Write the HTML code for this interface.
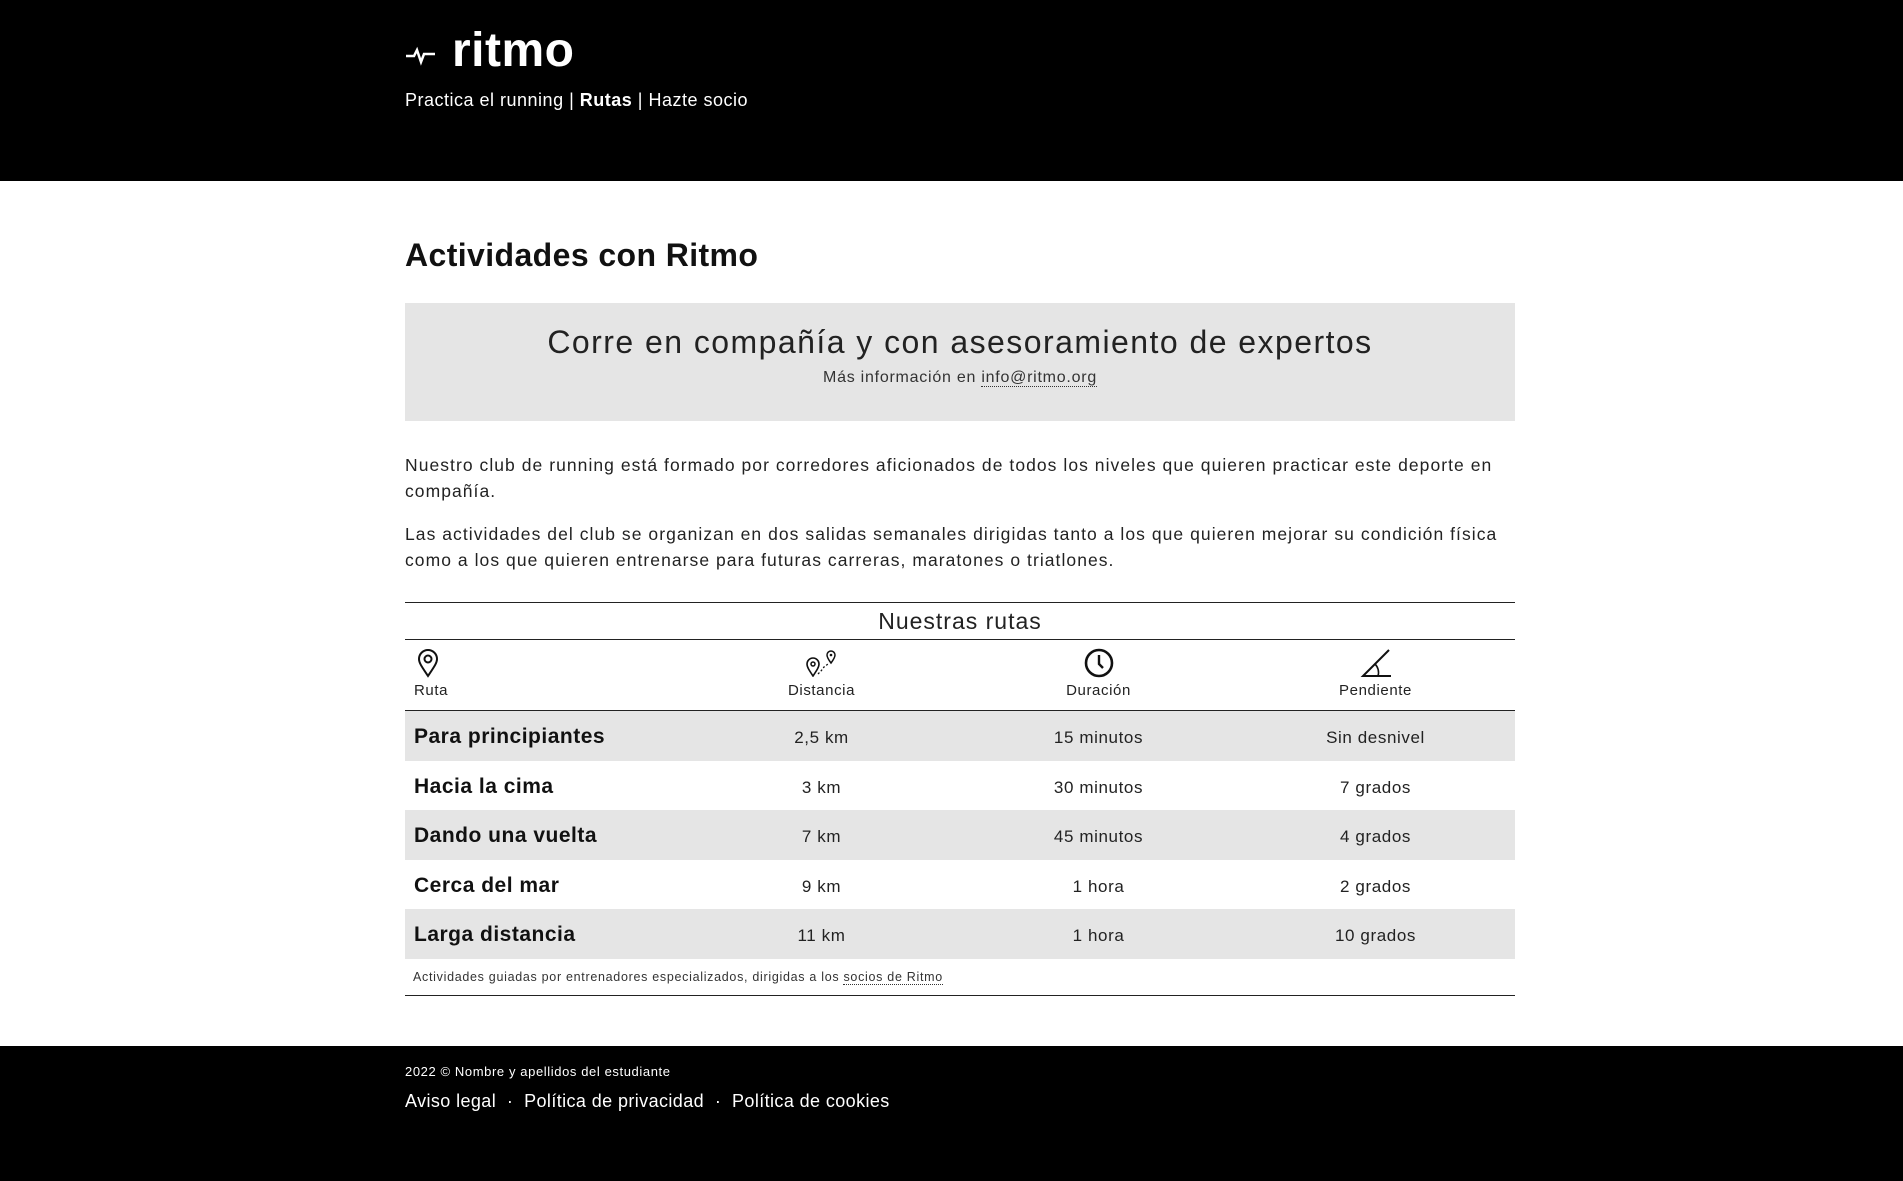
<!DOCTYPE html>
<html><head><meta charset="utf-8"><style>
*{margin:0;padding:0;box-sizing:border-box}
body{width:1903px;height:1181px;background:#fff;font-family:"Liberation Sans",sans-serif;color:#222;position:relative;overflow:hidden;letter-spacing:0.6px}
.a{position:absolute;white-space:nowrap}
header{position:absolute;left:0;top:0;width:1903px;height:181px;background:#000}
footer{position:absolute;left:0;top:1046px;width:1903px;height:135px;background:#000}
.w{color:#fff}
.row{position:absolute;left:405px;width:1110px;height:50px}
.row.g{background:#e5e5e5}
.row div{position:absolute;top:2px;line-height:50px;font-size:17px}
.row .n{left:9px;font-weight:bold;font-size:21px;line-height:48px;color:#111;top:2px;letter-spacing:0.5px}
.row .c{width:277px;text-align:center}
.line{position:absolute;left:405px;width:1110px;height:1px;background:#222}
.lbl{position:absolute;top:682px;font-size:15px;width:277px;text-align:center}
</style></head><body>
<header>
<svg class="a" style="left:405px;top:44px" width="32" height="22" viewBox="0 0 32 22"><path d="M1 12h8l3-6 4 12 3-8h11" fill="none" stroke="#fff" stroke-width="2.5"/></svg>
<div class="a w" style="left:452px;top:23px;font-size:48px;font-weight:bold;letter-spacing:0.5px">ritmo</div>
<div class="a w" style="left:405px;top:90px;font-size:18px;letter-spacing:0.5px">Practica el running | <b>Rutas</b> | Hazte socio</div>
</header>
<div class="a" style="left:405px;top:237px;font-size:32px;font-weight:bold;color:#111;letter-spacing:0.4px">Actividades con Ritmo</div>
<div class="a" style="left:405px;top:303px;width:1110px;height:118px;background:#e5e5e5"></div>
<div class="a" style="left:405px;width:1110px;text-align:center;top:324px;font-size:32px;color:#222;letter-spacing:1.45px">Corre en compañía y con asesoramiento de expertos</div>
<div class="a" style="left:405px;width:1110px;text-align:center;top:369px;font-size:16px;color:#333;letter-spacing:0.75px">Más información en <span style="border-bottom:1px dotted #333">info@ritmo.org</span></div>
<div class="a" style="left:405px;top:452px;font-size:17.5px;line-height:26px;white-space:normal;width:1110px;letter-spacing:1.05px">Nuestro club de running está formado por corredores aficionados de todos los niveles que quieren practicar este deporte en compañía.</div>
<div class="a" style="left:405px;top:521px;font-size:17.5px;line-height:26px;white-space:normal;width:1110px;letter-spacing:1.05px">Las actividades del club se organizan en dos salidas semanales dirigidas tanto a los que quieren mejorar su condición física como a los que quieren entrenarse para futuras carreras, maratones o triatlones.</div>
<div class="line" style="top:602px"></div>
<div class="a" style="left:405px;width:1110px;text-align:center;top:608px;font-size:23px;letter-spacing:1px">Nuestras rutas</div>
<div class="line" style="top:639px"></div>
<svg class="a" style="left:416px;top:648px" width="24" height="30" viewBox="0 0 24 30"><path d="M12 28C6 19 3 15 3 11a9 9 0 0118 0c0 4-3 8-9 17z" fill="none" stroke="#111" stroke-width="2"/><circle cx="12" cy="11" r="3.5" fill="none" stroke="#111" stroke-width="2"/></svg>
<div class="lbl" style="left:414px;text-align:left">Ruta</div>
<svg class="a" style="left:804px;top:647px" width="34" height="30" viewBox="0 0 34 30"><path d="M9 29C5 23 3 20 3 17a6 6 0 0112 0c0 3-2 6-6 12z" fill="none" stroke="#111" stroke-width="1.6"/><circle cx="9" cy="17" r="2" fill="none" stroke="#111" stroke-width="1.5"/><path d="M27 16c-3-4-4-6-4-8a4 4 0 018 0c0 2-1 4-4 8z" fill="none" stroke="#111" stroke-width="1.5"/><circle cx="27" cy="8" r="1.3" fill="#111"/><path d="M14 27l3-3 3-4 4-3" fill="none" stroke="#111" stroke-width="1.3" stroke-dasharray="2 2"/></svg>
<div class="lbl" style="left:683px">Distancia</div>
<svg class="a" style="left:1084px;top:648px" width="30" height="30" viewBox="0 0 30 30"><circle cx="15" cy="15" r="13" fill="none" stroke="#111" stroke-width="2.6"/><path d="M15 7v9l4 4" fill="none" stroke="#111" stroke-width="2.4"/></svg>
<div class="lbl" style="left:960px">Duración</div>
<svg class="a" style="left:1360px;top:648px" width="32" height="30" viewBox="0 0 32 30"><path d="M29 2L3 28h28" fill="none" stroke="#111" stroke-width="2"/><path d="M15 16a12 12 0 013 12" fill="none" stroke="#111" stroke-width="1.6"/></svg>
<div class="lbl" style="left:1237px">Pendiente</div>
<div class="line" style="top:710px"></div>
<div class="row g" style="top:711px"><div class="n">Para principiantes</div><div class="c" style="left:278px">2,5 km</div><div class="c" style="left:555px">15 minutos</div><div class="c" style="left:832px">Sin desnivel</div></div>
<div class="row" style="top:761px"><div class="n">Hacia la cima</div><div class="c" style="left:278px">3 km</div><div class="c" style="left:555px">30 minutos</div><div class="c" style="left:832px">7 grados</div></div>
<div class="row g" style="top:810px"><div class="n">Dando una vuelta</div><div class="c" style="left:278px">7 km</div><div class="c" style="left:555px">45 minutos</div><div class="c" style="left:832px">4 grados</div></div>
<div class="row" style="top:860px"><div class="n">Cerca del mar</div><div class="c" style="left:278px">9 km</div><div class="c" style="left:555px">1 hora</div><div class="c" style="left:832px">2 grados</div></div>
<div class="row g" style="top:909px"><div class="n">Larga distancia</div><div class="c" style="left:278px">11 km</div><div class="c" style="left:555px">1 hora</div><div class="c" style="left:832px">10 grados</div></div>
<div class="a" style="left:413px;top:970px;font-size:12.5px;color:#333;letter-spacing:0.7px">Actividades guiadas por entrenadores especializados, dirigidas a los <span style="border-bottom:1px dotted #333">socios de Ritmo</span></div>
<div class="line" style="top:995px"></div>
<footer>
<div class="a w" style="left:405px;top:18px;font-size:13px;letter-spacing:0.6px">2022 © Nombre y apellidos del estudiante</div>
<div class="a w" style="left:405px;top:45px;font-size:18px;letter-spacing:0.4px">Aviso legal &nbsp;·&nbsp; Política de privacidad &nbsp;·&nbsp; Política de cookies</div>
</footer>
</body></html>
